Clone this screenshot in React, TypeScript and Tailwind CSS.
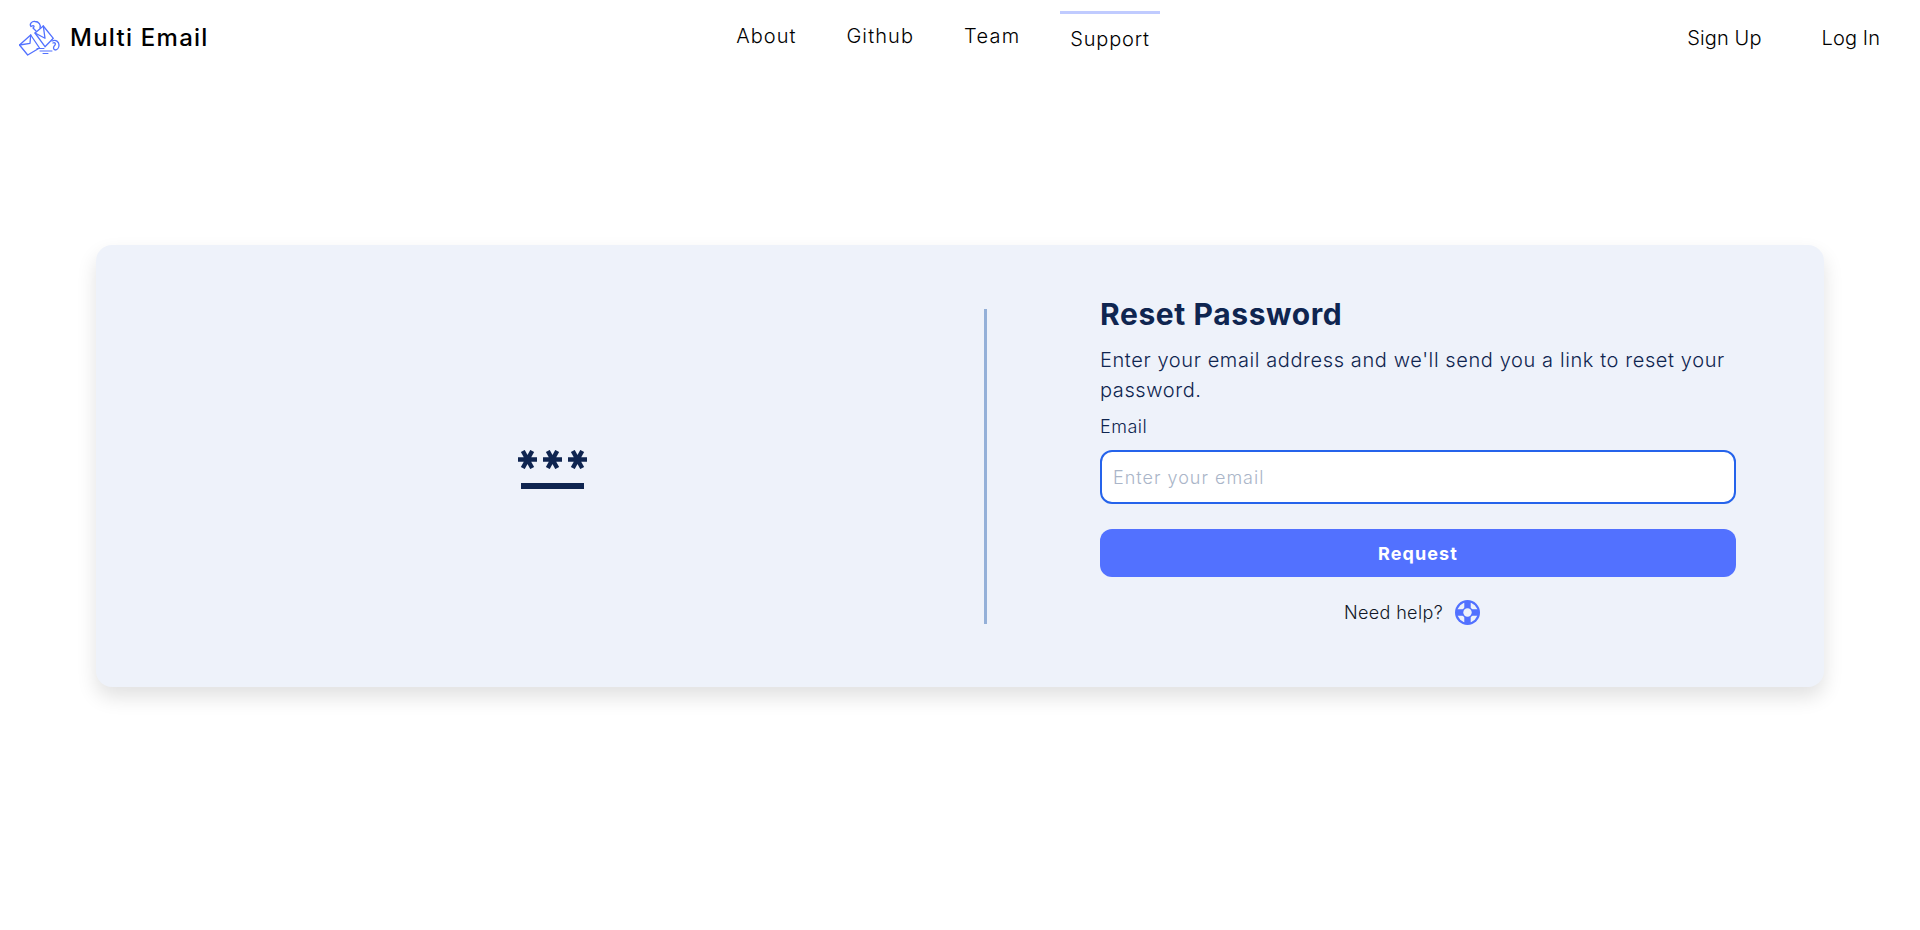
import React from "react";

function Logo() {
  return (
    <svg width="42" height="38" viewBox="0 0 42 38" fill="none" stroke="#5271ff" strokeWidth="1.3" strokeLinejoin="round" strokeLinecap="round">
      <path d="M0.5 26 L11.7 16 L20.5 29 L8.7 36 Z" />
      <path d="M0.5 26 L11 24.3 L11.7 16" />
      <path d="M16 14 L24.3 7 L34.3 19.3 L26 27.7 Z" />
      <path d="M16 14 L26 19.3 L24.3 7" />
      <path d="M17 12 L14 9 C16 7 15 6 12 7.5 C10 5 13 2 16 2.5 C20 2.5 22 6 21 9" />
      <path d="M33 22 C37 20 40 23 40 26 C40 29 38 31 36 31 C34 30 34 28 36 26 C37 25 36 23 34 24" />
      <path d="M18 29.5 H25 M21 32 H33 M24 34.5 H29" strokeWidth="1" />
    </svg>
  );
}

function Lifebuoy() {
  return (
    <svg width="25" height="25" viewBox="0 0 25 25" fill="none">
      <circle cx="12.5" cy="12.5" r="12.5" fill="#5271ff" />
      <circle cx="12.5" cy="12.5" r="8" stroke="#eef2fa" strokeWidth="4.6" />
      <path d="M9.3 2 H15.7 V23 H9.3 Z M2 9.3 H23 V15.7 H2 Z" fill="#5271ff" />
      <circle cx="12.5" cy="12.5" r="4.2" fill="#eef2fa" />
    </svg>
  );
}

function Asterisk() {
  return (
    <svg width="19" height="19" viewBox="0 0 19 19" stroke="#0f2550" strokeWidth="4.4">
      <path d="M0 9.5 H19 M4.8 1 L14.2 18 M14.2 1 L4.8 18" />
    </svg>
  );
}

export default function App() {
  return (
    <div className="min-h-[930px] bg-white font-['Inter','Liberation_Sans',sans-serif]">
      <header className="flex h-[76px] items-start justify-between text-black">
        <div className="ml-[19px] mt-[19px] flex w-[297px] items-center gap-[9px]">
          <Logo />
          <span className="text-[24px] font-medium leading-[36px] tracking-[1.25px]">Multi Email</span>
        </div>
        <nav className="flex items-start text-[20px] font-light leading-[30px]">
          <a className="mt-[21px] tracking-[1px]">About</a>
          <a className="ml-[50px] mt-[21px] tracking-[1.1px]">Github</a>
          <a className="ml-[50px] mt-[21px] tracking-[1.2px]">Team</a>
          <a className="ml-[40px] mt-[11px] border-t-[3px] border-[#c0cbff] px-[10px] pt-[10px] tracking-[0.8px]">Support</a>
        </nav>
        <div className="mr-[40px] mt-[23px] flex w-[300px] justify-end gap-[60px] text-[20px] font-light leading-[30px] tracking-[0.1px]">
          <a>Sign Up</a>
          <a>Log In</a>
        </div>
      </header>

      <main className="px-[96px] pt-[169px]">
        <section className="flex h-[442px] items-center rounded-[16px] bg-[#eef2fa] shadow-[0_10px_20px_rgba(0,0,0,0.12)]">
          <div className="flex h-full w-[888px] items-center justify-center pl-[24px] pt-[7px]">
            <div className="flex flex-col items-center gap-[14px]">
              <div className="flex gap-[6px]">
                <Asterisk />
                <Asterisk />
                <Asterisk />
              </div>
              <div className="h-[6px] w-[63px] bg-[#0f2550]" />
            </div>
          </div>
          <div className="h-[315px] w-[3px] bg-[#94b0d8]" />
          <div className="ml-[113px] w-[636px] self-start pt-[47px] text-[#0f2550]">
            <h1 className="text-[30px] font-bold leading-[45px] tracking-[0.6px]">Reset Password</h1>
            <p className="mt-[8px] text-[20px] font-light leading-[30px] tracking-[0.6px]">
              Enter your email address and we'll send you a link to reset your password.
            </p>
            <label className="mt-[8px] block text-[18px] font-light leading-[28px] tracking-[0.5px]">Email</label>
            <input
              className="mt-[9px] block h-[54px] w-full rounded-[12px] border-2 border-[#2563eb] bg-white px-[11px] text-[18px] font-light tracking-[1px] outline-none placeholder:text-[#aab5c8]"
              placeholder="Enter your email"
            />
            <button className="mt-[25px] block h-[48px] w-full rounded-[12px] bg-[#5271ff] text-[18px] font-bold tracking-[1.1px] text-white">
              Request
            </button>
            <div className="mt-[22px] flex items-center justify-center gap-[12px] pr-[12px] text-[18px] font-light leading-[27px] tracking-[0.35px] text-[#111827]">
              <span>Need help?</span>
              <Lifebuoy />
            </div>
          </div>
        </section>
      </main>
    </div>
  );
}
